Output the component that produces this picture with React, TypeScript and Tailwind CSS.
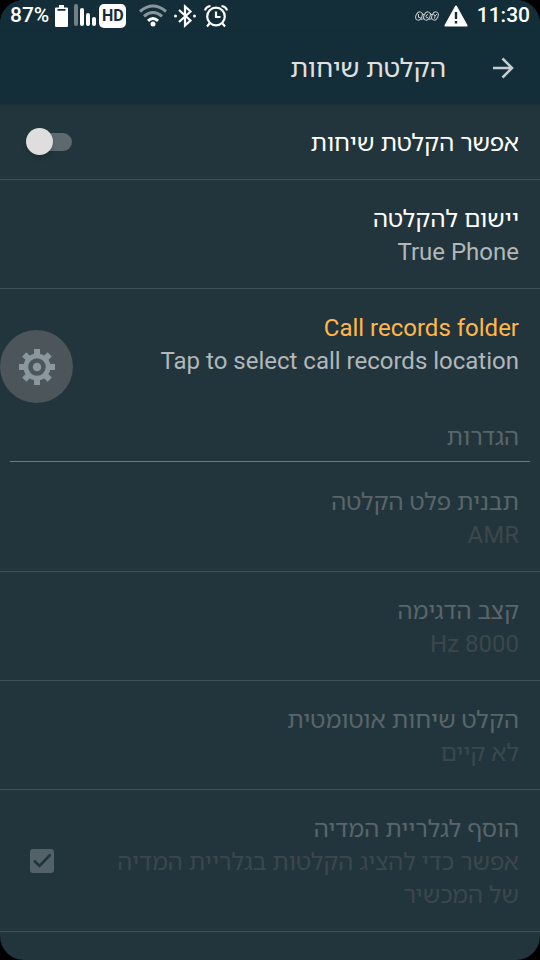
import type { ReactNode } from "react";

const CheckIcon = () => (
  <svg
    className="pointer-events-none absolute inset-0 size-6 text-[#22353c]"
    viewBox="0 0 24 24"
    fill="none"
    stroke="currentColor"
    strokeWidth="2.6"
  >
    <path d="M4 11.5 9.5 17 20.5 5.5" />
  </svg>
);

const StatusBar = () => (
  <div
    dir="ltr"
    className="flex h-8 items-center justify-between bg-[#132e38] px-[10px] text-[21px] font-medium text-white"
  >
    <div className="flex items-center">
      <span>87%</span>
      <svg className="ml-[6px] h-6 w-[13px]" viewBox="0 0 13 24" fill="#fff">
        <path d="M4 1h5v2.500h3a1 1 0 0 1 1 1V22a1 1 0 0 1-1 1H1a1 1 0 0 1-1-1V4.500a1 1 0 0 1 1-1h3z" />
        <path d="M2.500 5h8v1.800h-8z" fill="#132e38" />
      </svg>
      <svg className="ml-[6px] h-6 w-[23px]" viewBox="0 0 23 24" fill="#fff">
        <rect x="0" y="0" width="4" height="22" rx="2" fillOpacity=".4" />
        <rect x="6" y="4" width="4" height="18" rx="2" />
        <rect x="12" y="9" width="4" height="13" rx="2" />
        <rect x="18" y="13" width="4" height="9" rx="2" />
      </svg>
      <span className="ml-[2px] flex h-6 w-[27px] items-center justify-center rounded-[5px] bg-white text-[16px] font-bold text-[#132e38]">
        HD
      </span>
      <svg
        className="ml-[13px] h-6 w-7"
        viewBox="0 0 28 24"
        fill="none"
        stroke="#fff"
        strokeWidth="3"
      >
        <path d="M1 7.500Q14-3.500 27 7.500" strokeOpacity=".5" />
        <path d="M5 12.300Q14 4.700 23 12.300" strokeOpacity=".5" />
        <path d="M9 16.800Q14 12.300 19 16.800" />
        <circle cx="14" cy="20" r="2.500" fill="#fff" stroke="none" />
      </svg>
      <svg
        className="ml-[7px] h-6 w-[22px]"
        viewBox="0 0 22 24"
        fill="none"
        stroke="#fff"
        strokeWidth="2.200"
      >
        <path d="M5 6 16.500 16.500 11 21.500V2.500L16.500 7.500 5 18" />
        <circle cx="1.500" cy="12" r="1.500" fill="#fff" stroke="none" />
        <circle cx="20.500" cy="12" r="1.500" fill="#fff" stroke="none" />
      </svg>
      <svg
        className="ml-[8px] size-6"
        viewBox="0 0 24 24"
        fill="none"
        stroke="#fff"
        strokeWidth="2.200"
      >
        <circle cx="12" cy="12.500" r="8.800" />
        <path d="M12 7.500V13h4.500M1 6.500q1-4 5.500-4.500M23 6.500q-1-4-5.500-4.500M5.500 19.500 3 22.500M18.500 19.500l2.500 3" />
      </svg>
    </div>
    <div className="flex items-center">
      <svg
        className="h-3 w-6"
        viewBox="0 0 24 12"
        fill="none"
        stroke="#c4cccf"
        strokeWidth="1"
      >
        <ellipse cx="4" cy="6" rx="3" ry="4.300" transform="rotate(25 4 6)" />
        <ellipse cx="12" cy="6" rx="3" ry="4.300" transform="rotate(25 12 6)" />
        <ellipse cx="20" cy="6" rx="3" ry="4.300" transform="rotate(25 20 6)" />
        <path d="M3.500 4v3.500h2M13 4.500q-2 0-2 2t2 1M18.500 4l1.500 2 2-2M20 6l-.5 2.500M7 3l2 2M15 3l2 2M6 9.500l3-1M14 9.500l3-1" />
      </svg>
      <svg className="ml-[5px] h-[22px] w-6" viewBox="0 0 24 22" fill="#fff">
        <path d="M12 .5q.7 0 1 .7l10.500 19q.5 1.300-.7 1.300H1.200q-1.200 0-.7-1.300L11 1.200q.3-.7 1-.7z" />
        <path d="M10.800 7h2.400v7h-2.400zM10.800 16h2.400v2.500h-2.400z" fill="#132e38" />
      </svg>
      <span className="ml-[9px]">11:30</span>
    </div>
  </div>
);

type RowProps = {
  id: string;
  title: string;
  summary?: string;
  accent?: boolean;
  disabled?: boolean;
  last?: boolean;
  control?: ReactNode;
};

const Row = ({ id, title, summary, accent, disabled, last, control }: RowProps) => {
  const titleColor = disabled
    ? "text-[#59656a]"
    : accent
      ? "text-[#ffb74d]"
      : "text-white";
  const text = (
    <span className="flex-1 pt-1">
      <span className={`block ${titleColor}`}>{title}</span>
      {summary && (
        <span
          className={`block ${disabled ? "text-[#3c474c]" : "text-[#b1b7ba]"}`}
        >
          {summary}
        </span>
      )}
    </span>
  );
  const rowClass = `flex w-full items-center gap-8 py-[19px] ps-[21px] pe-6 text-start text-[24px] leading-[33px] ${
    last ? "" : "border-b border-[#3d5158]"
  }`;

  return control ? (
    <label htmlFor={id} className={rowClass}>
      {text}
      {control}
    </label>
  ) : (
    <button id={id} type="button" disabled={disabled} className={rowClass}>
      {text}
    </button>
  );
};

const App = () => {
  return (
    <div className="min-h-screen bg-black">
      <div
        dir="rtl"
        lang="he"
        className="relative min-h-screen overflow-hidden rounded-3xl bg-[#22353c] font-['Roboto','Noto_Sans_Hebrew','Open_Sans',sans-serif]"
      >
        <StatusBar />
        <header className="flex h-[72px] items-center gap-[41px] bg-[#132e38] ps-[21px] shadow-sm">
          <button type="button" aria-label="חזרה" className="p-1">
            <svg
              className="size-6 text-[#c8cccd]"
              viewBox="0 0 24 24"
              fill="none"
              stroke="currentColor"
              strokeWidth="2.500"
            >
              <path d="M2 12h19M11.500 2.500 21 12l-9.500 9.500" />
            </svg>
          </button>
          <h1 className="text-[26px] text-[#e0e0e0]">הקלטת שיחות</h1>
        </header>

        <main>
          <Row
            id="enable"
            title="אפשר הקלטת שיחות"
            control={
              <span className="relative flex h-7 w-12 items-center">
                <input
                  id="enable"
                  type="checkbox"
                  role="switch"
                  className="h-[18px] w-9 appearance-none rounded-full bg-[#5c696e]"
                />
                <span className="pointer-events-none absolute left-[2px] size-[27px] rounded-full bg-[#dedede] shadow-md" />
              </span>
            }
          />
          <Row id="app" title="יישום להקלטה" summary="True Phone" />
          <Row
            id="folder"
            title="Call records folder"
            summary="Tap to select call records location"
            accent
            last
          />

          <h2 className="mx-[10px] mb-px border-b border-[#538299] px-[11px] pt-6 pb-[7px] text-[24px] leading-[33px] text-[#59656a]">
            הגדרות
          </h2>

          <Row id="format" title="תבנית פלט הקלטה" summary="AMR" disabled />
          <Row id="rate" title="קצב הדגימה" summary="8000 Hz" disabled />
          <Row
            id="auto"
            title="הקלט שיחות אוטומטית"
            summary="לא קיים"
            disabled
          />
          <Row
            id="gallery"
            title="הוסף לגלריית המדיה"
            summary="אפשר כדי להציג הקלטות בגלריית המדיה של המכשיר"
            disabled
            control={
              <span className="relative me-[6px] size-6">
                <input
                  id="gallery"
                  type="checkbox"
                  defaultChecked
                  disabled
                  className="block size-6 appearance-none rounded-[3px] bg-[#536168]"
                />
                <CheckIcon />
              </span>
            }
          />
        </main>

        <button
          type="button"
          aria-label="הגדרות"
          className="absolute top-[330px] left-0 flex size-[73px] items-center justify-center rounded-full bg-[#4c5559]"
        >
          <svg className="size-9 text-[#8a979d]" viewBox="0 0 36 36">
            <g fill="currentColor">
              <rect x="15" y="0" width="6" height="36" />
              <rect x="0" y="15" width="36" height="6" />
              <rect x="15" y="0" width="6" height="36" transform="rotate(45 18 18)" />
              <rect x="15" y="0" width="6" height="36" transform="rotate(-45 18 18)" />
              <circle cx="18" cy="18" r="13.500" />
            </g>
            <circle cx="18" cy="18" r="6.500" fill="none" stroke="#4c5559" strokeWidth="4.500" />
          </svg>
        </button>
      </div>
    </div>
  );
};

export default App;
